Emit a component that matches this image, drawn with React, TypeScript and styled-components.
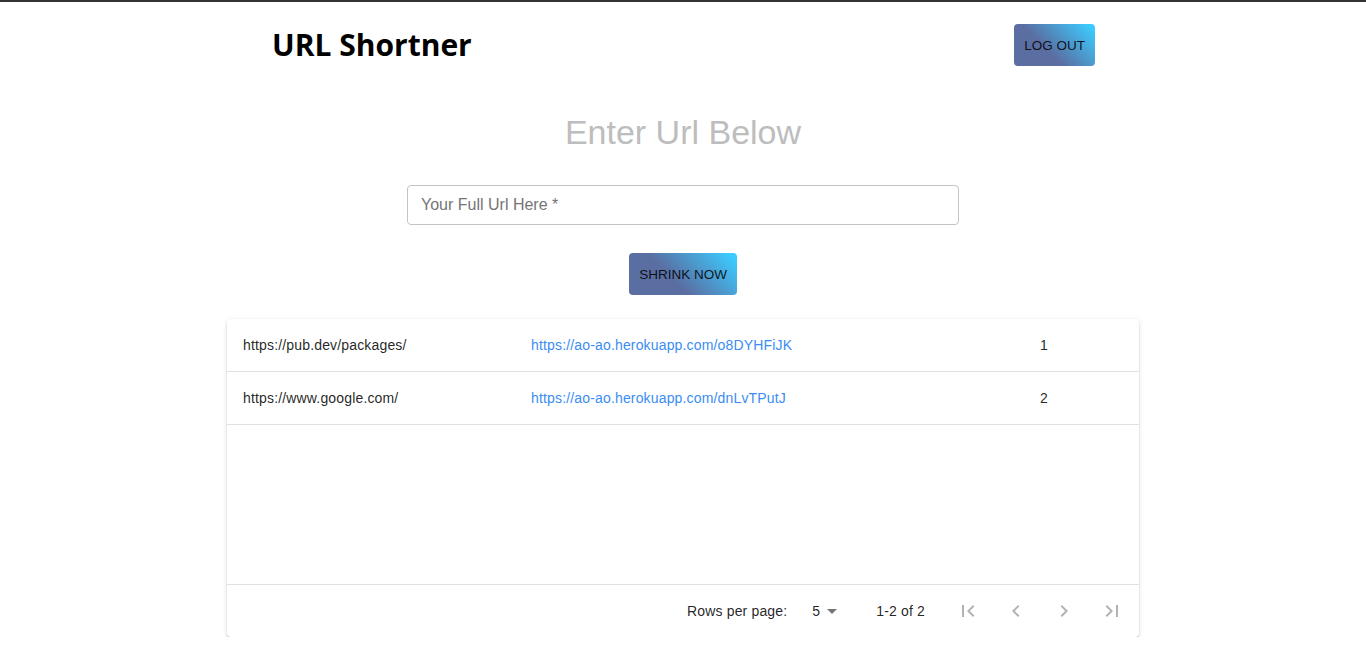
import React from "react";
import styled, { createGlobalStyle } from "styled-components";

const GlobalStyle = createGlobalStyle`
  html, body { margin: 0; padding: 0; background: #ffffff; }
  body { font-family: "Liberation Sans", Arial, sans-serif; color: rgba(0,0,0,0.87); }
  * { box-sizing: border-box; }
`;

const TopBar = styled.div`
  height: 2px;
  background: #333333;
`;

const Page = styled.div`
  width: 912px;
  margin: 0 auto;
  display: flex;
  flex-direction: column;
  align-items: center;
`;

const Header = styled.header`
  align-self: stretch;
  display: flex;
  align-items: center;
  justify-content: space-between;
  padding: 22px 44px 0 45px;
`;

const Title = styled.h1`
  margin: 0;
  font-family: "Open Sans", "Noto Sans", sans-serif;
  font-weight: 700;
  font-size: 30px;
  line-height: 42px;
  color: #000000;
`;

const GradientButton = styled.button`
  height: 42px;
  padding: 0 10px;
  border: none;
  border-radius: 4px;
  background: linear-gradient(45deg, #5a6ea2 40%, #3ccbff 95%);
  color: rgba(0, 0, 0, 0.87);
  font-family: "Liberation Sans", Arial, sans-serif;
  font-size: 13.5px;
  letter-spacing: 0;
  text-transform: uppercase;
  cursor: pointer;
`;

const Heading = styled.h2`
  margin: 45px 0 0;
  font-family: "Liberation Sans", Arial, sans-serif;
  font-weight: 400;
  font-size: 34px;
  line-height: 42px;
  color: #bdbdbd;
`;

const UrlInput = styled.input`
  margin-top: 32px;
  width: 552px;
  height: 40px;
  padding: 0 13px;
  border: 1px solid #c4c4c4;
  border-radius: 4px;
  font-family: "Liberation Sans", Arial, sans-serif;
  font-size: 16px;
  color: rgba(0, 0, 0, 0.87);
  outline: none;
  &::placeholder { color: #757575; }
`;

const ShrinkButton = styled(GradientButton)`
  margin-top: 28px;
`;

const Card = styled.div`
  margin-top: 24px;
  align-self: stretch;
  background: #fff;
  border-radius: 4px;
  box-shadow: 0px 3px 1px -2px rgba(0,0,0,0.2), 0px 2px 2px 0px rgba(0,0,0,0.14), 0px 1px 5px 0px rgba(0,0,0,0.12);
  display: flex;
  flex-direction: column;
`;

const Row = styled.div`
  display: grid;
  grid-template-columns: 288px 509px 1fr;
  height: 53px;
  border-bottom: 1px solid #e0e0e0;
`;

const Cell = styled.div`
  display: flex;
  align-items: center;
  padding: 0 16px;
  font-size: 14px;
  letter-spacing: 0.16px;
  color: rgba(0, 0, 0, 0.87);
`;

const ShortLink = styled.a`
  color: #3a8df3;
  text-decoration: none;
`;

const EmptySpace = styled.div`
  height: 160px;
  border-bottom: 1px solid #e0e0e0;
`;

const Pager = styled.div`
  height: 52px;
  display: flex;
  align-items: center;
  justify-content: flex-end;
  padding-right: 3px;
  font-size: 14px;
  letter-spacing: 0.16px;
  color: rgba(0, 0, 0, 0.87);
`;

const Caption = styled.span``;

const RowsSelect = styled.div`
  display: flex;
  align-items: center;
  margin-left: 25px;
`;

const RangeText = styled.span`
  margin-left: 32px;
`;

const Actions = styled.div`
  display: flex;
  margin-left: 19px;
`;

const IconButton = styled.button`
  width: 48px;
  height: 48px;
  padding: 12px;
  border: none;
  background: transparent;
  display: flex;
  align-items: center;
  justify-content: center;
  color: rgba(0, 0, 0, 0.3);
`;

const Icon = ({ d, size = 24, color = "currentColor" }: { d: string; size?: number; color?: string }) => (
  <svg width={size} height={size} viewBox="0 0 24 24" fill={color}>
    <path d={d} />
  </svg>
);

const rows = [
  { long: "https://pub.dev/packages/", short: "https://ao-ao.herokuapp.com/o8DYHFiJK", clicks: 1 },
  { long: "https://www.google.com/", short: "https://ao-ao.herokuapp.com/dnLvTPutJ", clicks: 2 },
];

const icons = [
  "M18.41 16.59L13.82 12l4.59-4.59L17 6l-6 6 6 6zM6 6h2v12H6z",
  "M15.41 7.41L14 6l-6 6 6 6 1.41-1.41L10.83 12z",
  "M10 6L8.59 7.41 13.17 12l-4.58 4.59L10 18l6-6z",
  "M5.59 7.41L10.18 12l-4.59 4.59L7 18l6-6-6-6zM16 6h2v12h-2z",
];

export default function App() {
  return (
    <>
      <GlobalStyle />
      <TopBar />
      <Page>
        <Header>
          <Title>URL Shortner</Title>
          <GradientButton>Log out</GradientButton>
        </Header>
        <Heading>Enter Url Below</Heading>
        <UrlInput placeholder="Your Full Url Here *" />
        <ShrinkButton>Shrink now</ShrinkButton>
        <Card>
          {rows.map((r) => (
            <Row key={r.short}>
              <Cell>{r.long}</Cell>
              <Cell>
                <ShortLink href="#">{r.short}</ShortLink>
              </Cell>
              <Cell>{r.clicks}</Cell>
            </Row>
          ))}
          <EmptySpace />
          <Pager>
            <Caption>Rows per page:</Caption>
            <RowsSelect>
              5
              <Icon d="M7 10l5 5 5-5z" color="rgba(0,0,0,0.54)" />
            </RowsSelect>
            <RangeText>1-2 of 2</RangeText>
            <Actions>
              {icons.map((d) => (
                <IconButton key={d} disabled>
                  <Icon d={d} />
                </IconButton>
              ))}
            </Actions>
          </Pager>
        </Card>
      </Page>
    </>
  );
}
